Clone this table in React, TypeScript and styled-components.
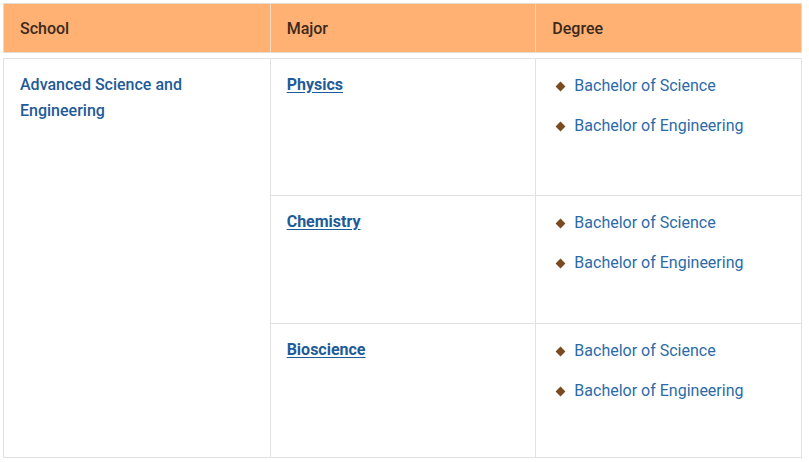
import React from "react";
import styled, { createGlobalStyle } from "styled-components";

const Global = createGlobalStyle`
  html, body { margin: 0; padding: 0; background: #fff; }
  body { font-family: Roboto, "Liberation Sans", Arial, sans-serif; }
`;

const Page = styled.div`
  padding: 3px 6px 0 3px;
  width: 808px;
  box-sizing: border-box;
`;

const Header = styled.div`
  display: grid;
  grid-template-columns: repeat(3, 1fr);
  height: 50px;
  background: #ffb073;
  border: 1px solid #eadbd0;
  box-sizing: border-box;
`;

const HeadCell = styled.div<{ $first?: boolean }>`
  display: flex;
  align-items: center;
  padding-left: 16px;
  font-size: 16px;
  font-weight: 500;
  color: #3b2a1c;
  border-left: ${(p) => (p.$first ? "none" : "1px solid #f4d9c4")};
`;

const Body = styled.div`
  margin-top: 5px;
  display: grid;
  grid-template-columns: repeat(3, 1fr);
  grid-template-rows: 136px 128px 134px;
  border: 1px solid #e2e2e2;
  box-sizing: border-box;
`;

const SchoolCell = styled.div`
  grid-row: 1 / span 3;
  padding: 13px 16px;
  font-size: 16px;
  line-height: 26px;
  font-weight: 500;
  color: #1e5b98;
`;

const Cell = styled.div<{ $top?: boolean }>`
  border-left: 1px solid #e2e2e2;
  border-top: ${(p) => (p.$top ? "none" : "1px solid #e2e2e2")};
  padding: 13px 16px;
  box-sizing: border-box;
`;

const MajorLink = styled.a`
  font-size: 16px;
  line-height: 26px;
  font-weight: 700;
  color: #1e5b98;
  text-decoration: underline;
  text-underline-offset: 2px;
`;

const DegreeList = styled.ul`
  list-style: none;
  margin: 0;
  padding: 1px 0 0 3px;
  display: flex;
  flex-direction: column;
  gap: 14px;
`;

const DegreeItem = styled.li`
  display: flex;
  align-items: center;
  gap: 8px;
  font-size: 16px;
  line-height: 26px;
  color: #2b6ba8;
`;

const Diamond = styled.span`
  width: 7px;
  height: 7px;
  background: #7a4a20;
  transform: rotate(45deg);
  margin: 0 2px 0 2px;
  flex: none;
`;

const majors = ["Physics", "Chemistry", "Bioscience"];
const degrees = ["Bachelor of Science", "Bachelor of Engineering"];

export default function App() {
  return (
    <>
      <Global />
      <Page>
        <Header>
          <HeadCell $first>School</HeadCell>
          <HeadCell>Major</HeadCell>
          <HeadCell>Degree</HeadCell>
        </Header>
        <Body>
          <SchoolCell>
            Advanced Science and
            <br />
            Engineering
          </SchoolCell>
          {majors.map((m, i) => (
            <React.Fragment key={m}>
              <Cell $top={i === 0} style={{ gridRow: i + 1, gridColumn: 2 }}>
                <MajorLink href="#">{m}</MajorLink>
              </Cell>
              <Cell $top={i === 0} style={{ gridRow: i + 1, gridColumn: 3 }}>
                <DegreeList>
                  {degrees.map((d) => (
                    <DegreeItem key={d}>
                      <Diamond />
                      {d}
                    </DegreeItem>
                  ))}
                </DegreeList>
              </Cell>
            </React.Fragment>
          ))}
        </Body>
      </Page>
    </>
  );
}
